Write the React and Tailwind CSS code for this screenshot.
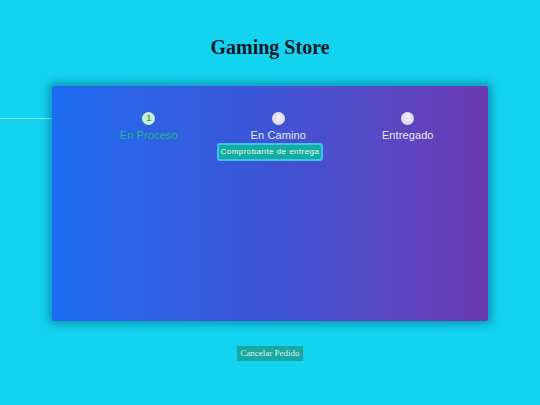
import React from 'react';

const steps = [
  { n: 1, label: 'En Proceso', active: true },
  { n: 2, label: 'En Camino', active: false },
  { n: 3, label: 'Entregado', active: false },
];

const App = () => {
  return (
    <div className="relative min-h-[405px] w-full bg-[#13d4f0] pt-[34px]">
      {/* connector line, only its left end shows beside the card */}
      <div className="absolute left-0 top-[118px] h-px w-[60px] bg-[#8eeafa]" />

      <h1 className="text-center text-[20px] font-bold leading-[26px] text-[#111827] [font-family:'Liberation_Serif',serif]">
        Gaming Store
      </h1>

      <div className="relative mx-[52px] mt-[26px] h-[235px] rounded-[2px] bg-gradient-to-r from-[#1a6cf2] via-[#3c55d6] to-[#6a39b2] shadow-[0_0_10px_3px_rgba(0,60,90,0.45)] [font-family:'Liberation_Sans',Arial,sans-serif]">
        <div className="flex pl-[32px] pt-[26px]">
          {steps.map((s) => (
            <div key={s.n} className="flex w-[129.5px] flex-col items-center">
              <div
                className={
                  s.active
                    ? 'flex h-[13px] w-[13px] items-center justify-center rounded-full bg-[#cdeed6] text-[9px] font-bold leading-none text-[#22b07a]'
                    : 'flex h-[13px] w-[13px] items-center justify-center rounded-full bg-[#e4e1ee] text-[9px] font-bold leading-none text-[#f3f2f8]'
                }
              >
                {s.n}
              </div>
              <span
                className={
                  s.active
                    ? 'mt-[4px] text-[11px] leading-[13px] tracking-[0.1px] text-[#20b886]'
                    : 'mt-[4px] text-[11px] leading-[13px] tracking-[0.1px] text-[#e8e8f4]'
                }
              >
                {s.label}
              </span>
            </div>
          ))}
        </div>
        <div className="mt-[1px] flex justify-center">
          <button className="h-[18px] rounded-[3px] border-2 border-[#3cc4f0] bg-[#14ad9e] px-[2px] text-[8px] font-normal leading-[14px] tracking-[0.45px] text-[#eafaf6]">
            Comprobante de entrega
          </button>
        </div>
      </div>

      <div className="mt-[25px] flex justify-center">
        <button className="h-[15px] bg-[#1aa8a0] px-[3px] text-[9px] leading-[15px] text-[#d8f4ee] [font-family:'Liberation_Serif',serif]">
          Cancelar Pedido
        </button>
      </div>
    </div>
  );
};

export default App;
